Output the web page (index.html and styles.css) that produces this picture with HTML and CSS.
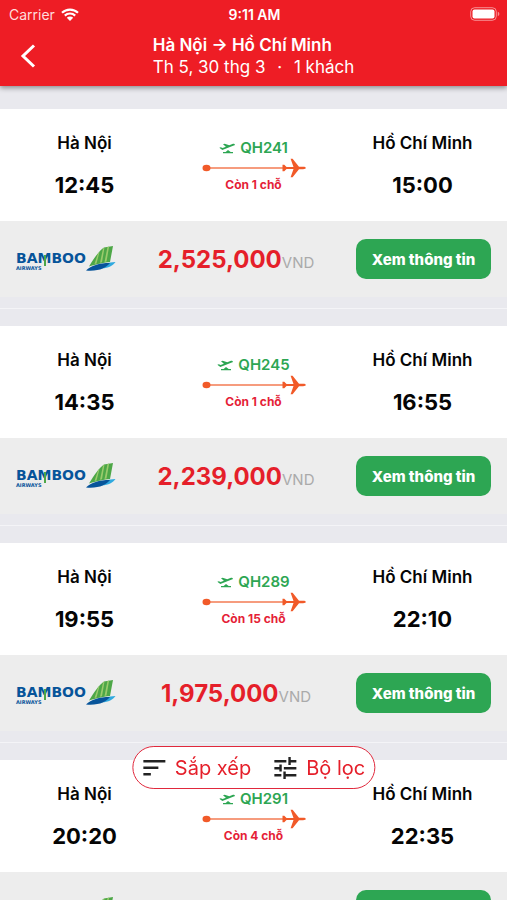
FILE: index.html
```
<!DOCTYPE html>
<html lang="vi">

<head>
    <meta charset="UTF-8" />
    <meta name="viewport" content="width=device-width, initial-scale=1.0" />
    <title>Hà Nội → Hồ Chí Minh</title>

    <link rel="stylesheet" href="styles.css">
</head>

<body>
    <!-- shared icons -->
    <svg class="sprite" aria-hidden="true">
        <symbol id="takeoff" viewBox="0 0 24 18">
            <path d="M.5 8.500l2.200-.8 2.800 1.200 4.800-1.900L6 3.400l2.500-.9 6.900 2.400L21 2.700c1.300-.5 2.500-.2 2.700.5.3.9-.4 1.700-1.500 2.100L5 12z" />
            <path d="M10 15l3.500-3 4 3H21v1.800H6V15z" />
        </symbol>
        <symbol id="route" viewBox="0 0 104 20">
            <path d="M4 9.300h80v1.400H4z" opacity=".8" />
            <ellipse cx="4.500" cy="10" rx="4" ry="3.200" />
            <path d="M80.500 6.800h1.800l2.200 2.200h7L88.600.8h2L97 8.800h4c1.800 0 2.800.5 2.800 1.200s-1 1.200-2.800 1.200h-4l-6.400 8h-2L91.500 11h-7l-2.200 2.200h-1.800V6.800z" />
        </symbol>
        <symbol id="tail" viewBox="0 0 30 26">
            <path fill="#4da747" d="M3 20.500C8 12 13 5 18 1.500L27 0l-3 16c-6 .5-12 2-21 4.500z" />
            <path fill="#9bcb6c" d="M12 7.500l1.500-1.500-3 11.500-2 .6zM17 2.500l1.500-1-2.500 14.800-2 .5zM21.500 1l1.600-.4-2.600 15-2 .3z" />
            <path fill="#2fa9df" d="M12 22c5-4 10-5.800 17.500-6-3 4-9 7.500-17.500 6z" />
            <path fill="#07549a" d="M0 24.500c5-5 13-7.500 24-7.500-4 5-11 8.500-24 7.500z" />
        </symbol>
    </svg>

    <header class="header">
        <div class="status">
            <div class="carrier">
                <span>Carrier</span>
                <svg class="wifi" viewBox="0 0 18 13" aria-hidden="true">
                    <path d="M1 4.800a11.500 11.500 0 0 1 16 0M3.800 7.600a7.500 7.500 0 0 1 10.400 0" fill="none" stroke="#fff" stroke-width="2.200" />
                    <path d="M5.800 9.700a4.600 4.600 0 0 1 6.400 0L9 13z" fill="#fff" />
                </svg>
            </div>
            <span class="clock">9:11 AM</span>
            <svg class="battery" viewBox="0 0 30 14" aria-hidden="true">
                <rect x=".7" y=".7" width="25.600" height="12.600" rx="4" fill="none" stroke="#fff" stroke-opacity=".5" />
                <rect x="2.500" y="2.500" width="22" height="9" rx="2" fill="#fff" />
                <path d="M27.800 4.800v4.400q1.600-.6 1.600-2.200t-1.600-2.200z" fill="#fff" fill-opacity=".5" />
            </svg>
        </div>
        <div class="nav">
            <button class="back" type="button" aria-label="Quay lại">
                <svg viewBox="0 0 16 24" aria-hidden="true">
                    <path d="M14 1.500L3 12l11 10.500" fill="none" stroke="#fff" stroke-width="3" />
                </svg>
            </button>
            <div class="trip">
                <h1>Hà Nội → Hồ Chí Minh</h1>
                <p>Th 5, 30 thg 3 <span class="dot">·</span> 1 khách</p>
            </div>
        </div>
    </header>

    <main class="flights">
        <article class="flight">
            <div class="journey">
                <div class="stop">
                    <h2>Hà Nội</h2>
                    <time>12:45</time>
                </div>
                <div class="leg">
                    <span class="code"><svg class="takeoff"><use href="#takeoff" /></svg>QH241</span>
                    <svg class="route"><use href="#route" /></svg>
                    <span class="seats">Còn 1 chỗ</span>
                </div>
                <div class="stop">
                    <h2>Hồ Chí Minh</h2>
                    <time>15:00</time>
                </div>
            </div>
            <div class="fare">
                <div class="airline">
                    <div class="wordmark"><b>BA<span class="stem">M</span>BOO</b><small>AIRWAYS</small></div>
                    <svg class="tail"><use href="#tail" /></svg>
                </div>
                <p class="price"><strong>2,525,000</strong>VND</p>
                <button class="details" type="button">Xem thông tin</button>
            </div>
        </article>

        <article class="flight">
            <div class="journey">
                <div class="stop">
                    <h2>Hà Nội</h2>
                    <time>14:35</time>
                </div>
                <div class="leg">
                    <span class="code"><svg class="takeoff"><use href="#takeoff" /></svg>QH245</span>
                    <svg class="route"><use href="#route" /></svg>
                    <span class="seats">Còn 1 chỗ</span>
                </div>
                <div class="stop">
                    <h2>Hồ Chí Minh</h2>
                    <time>16:55</time>
                </div>
            </div>
            <div class="fare">
                <div class="airline">
                    <div class="wordmark"><b>BA<span class="stem">M</span>BOO</b><small>AIRWAYS</small></div>
                    <svg class="tail"><use href="#tail" /></svg>
                </div>
                <p class="price"><strong>2,239,000</strong>VND</p>
                <button class="details" type="button">Xem thông tin</button>
            </div>
        </article>

        <article class="flight">
            <div class="journey">
                <div class="stop">
                    <h2>Hà Nội</h2>
                    <time>19:55</time>
                </div>
                <div class="leg">
                    <span class="code"><svg class="takeoff"><use href="#takeoff" /></svg>QH289</span>
                    <svg class="route"><use href="#route" /></svg>
                    <span class="seats">Còn 15 chỗ</span>
                </div>
                <div class="stop">
                    <h2>Hồ Chí Minh</h2>
                    <time>22:10</time>
                </div>
            </div>
            <div class="fare">
                <div class="airline">
                    <div class="wordmark"><b>BA<span class="stem">M</span>BOO</b><small>AIRWAYS</small></div>
                    <svg class="tail"><use href="#tail" /></svg>
                </div>
                <p class="price"><strong>1,975,000</strong>VND</p>
                <button class="details" type="button">Xem thông tin</button>
            </div>
        </article>

        <article class="flight">
            <div class="journey">
                <div class="stop">
                    <h2>Hà Nội</h2>
                    <time>20:20</time>
                </div>
                <div class="leg">
                    <span class="code"><svg class="takeoff"><use href="#takeoff" /></svg>QH291</span>
                    <svg class="route"><use href="#route" /></svg>
                    <span class="seats">Còn 4 chỗ</span>
                </div>
                <div class="stop">
                    <h2>Hồ Chí Minh</h2>
                    <time>22:35</time>
                </div>
            </div>
            <div class="fare">
                <div class="airline">
                    <div class="wordmark"><b>BA<span class="stem">M</span>BOO</b><small>AIRWAYS</small></div>
                    <svg class="tail"><use href="#tail" /></svg>
                </div>
                <p class="price"><strong>1,799,000</strong>VND</p>
                <button class="details" type="button">Xem thông tin</button>
            </div>
        </article>
    </main>

    <div class="toolbar">
        <button type="button">
            <svg viewBox="0 0 24 24" aria-hidden="true">
                <path d="M1 4h22v2.400H1zM1 10.500h15v2.400H1zM1 17h7.500v2.400H1z" />
            </svg>
            Sắp xếp
        </button>
        <button type="button">
            <svg viewBox="0 0 24 24" aria-hidden="true">
                <path d="M1 4h12v2.400H1zM15 1h2.400v3H23v2.400h-5.600V9H15zM1 11h5V8.500h2.400v7H6v-2.100H1zM10.500 11H23v2.400H10.500zM1 18h7v2.400H1zM10 15.500h2.400V18H23v2.400H12.400V23H10z" />
            </svg>
            Bộ lọc
        </button>
    </div>
</body>

</html>
```

FILE: styles.css
```
* {
    box-sizing: border-box;
}

body {
    margin: 0;
    height: 100vh;
    overflow: hidden;
    display: flex;
    flex-direction: column;
    background: #e9e9ee;
    color: #050505;
    font-family: Inter, "Liberation Sans", sans-serif;
}

h1,
h2,
p {
    margin: 0;
}

button {
    border: none;
    padding: 0;
    font-family: inherit;
    cursor: pointer;
}

.sprite {
    position: absolute;
    width: 0;
    height: 0;
}

/* header */
.header {
    flex: none;
    background: #ee1d25;
    color: white;
    box-shadow: 0 2px 5px rgba(0, 0, 0, 0.4);
    z-index: 1;
}

.status {
    display: grid;
    grid-template-columns: 1fr auto 1fr;
    align-items: center;
    height: 28px;
    padding: 0 7px 0 9px;
    font-size: 14px;
}

.carrier {
    display: flex;
    align-items: center;
    gap: 6px;
    color: #ffdcdd;
}

.wifi {
    width: 18px;
    height: 13px;
}

.clock {
    font-weight: 600;
}

.battery {
    width: 30px;
    height: 14px;
    justify-self: end;
}

.nav {
    display: grid;
    grid-template-columns: 1fr auto 1fr;
    height: 58px;
    padding: 6px 20px;
}

.back {
    justify-self: start;
    height: 44px;
    background: none;
}

.back svg {
    display: block;
    width: 16px;
    height: 24px;
}

.trip h1 {
    font-size: 17px;
    line-height: 22px;
    font-weight: 600;
}

.trip p {
    font-size: 17px;
    line-height: 22px;
}

.dot {
    margin: 0 7px;
}

/* flight list */
.flights {
    flex: 1;
    min-height: 0;
    overflow: hidden;
    padding-top: 23px;
}

.flight {
    margin-bottom: 17px;
    padding-bottom: 11px;
    border-bottom: 1px solid #f4f4f7;
}

.journey {
    display: grid;
    grid-template-columns: 1fr 1fr 1fr;
    height: 112px;
    background: white;
}

.stop {
    display: flex;
    flex-direction: column;
    align-items: center;
    gap: 18px;
    padding-top: 22px;
}

.stop h2 {
    font-size: 17px;
    line-height: 24px;
    font-weight: 600;
}

.stop time {
    font-size: 22px;
    line-height: 24px;
    font-weight: 700;
}

.leg {
    display: flex;
    flex-direction: column;
    align-items: center;
    padding-top: 29px;
}

.code {
    display: flex;
    align-items: center;
    gap: 5px;
    color: #2da653;
    font-size: 15px;
    line-height: 20px;
    font-weight: 600;
}

.takeoff {
    width: 16px;
    height: 12px;
    fill: currentColor;
}

.route {
    width: 104px;
    height: 20px;
    fill: #f15a29;
}

.seats {
    color: #e51f38;
    font-size: 12px;
    line-height: 14px;
    font-weight: 700;
}

.fare {
    display: grid;
    grid-template-columns: 100px 1fr 135px;
    align-items: center;
    height: 76px;
    padding: 0 16px;
    background: #ededed;
}

.airline {
    display: flex;
    align-items: center;
}

/* airline logo */
.wordmark {
    display: flex;
    flex-direction: column;
    padding-top: 4px;
    color: #07549a;
    font-family: "DejaVu Sans", sans-serif;
}

.wordmark b {
    font-size: 14px;
    line-height: 14px;
}

.wordmark small {
    font-size: 5px;
    line-height: 6px;
    font-weight: 700;
}

.stem {
    position: relative;
}

.stem::after {
    content: "";
    position: absolute;
    left: 6px;
    top: 5px;
    width: 2px;
    height: 11px;
    background: #4da747;
}

.tail {
    flex: none;
    width: 30px;
    height: 26px;
}

.price {
    text-align: center;
    color: #aaa;
    font-size: 15px;
}

.price strong {
    color: #e51f2a;
    font-size: 24px;
    font-weight: 700;
}

.details {
    height: 40px;
    border-radius: 10px;
    background: #2da653;
    color: white;
    font-size: 15px;
    font-weight: 800;
}

/* floating sort / filter bar */
.toolbar {
    position: fixed;
    left: 50%;
    bottom: 111px;
    transform: translateX(-50%);
    display: flex;
    gap: 22px;
    height: 43px;
    padding: 0 9px;
    border: 1px solid #e0283c;
    border-radius: 22px;
    background: white;
    white-space: nowrap;
}

.toolbar button {
    display: flex;
    align-items: center;
    gap: 9px;
    background: none;
    color: #e51f2a;
    font-size: 20px;
}

.toolbar svg {
    width: 24px;
    height: 24px;
    fill: #222;
}
```
